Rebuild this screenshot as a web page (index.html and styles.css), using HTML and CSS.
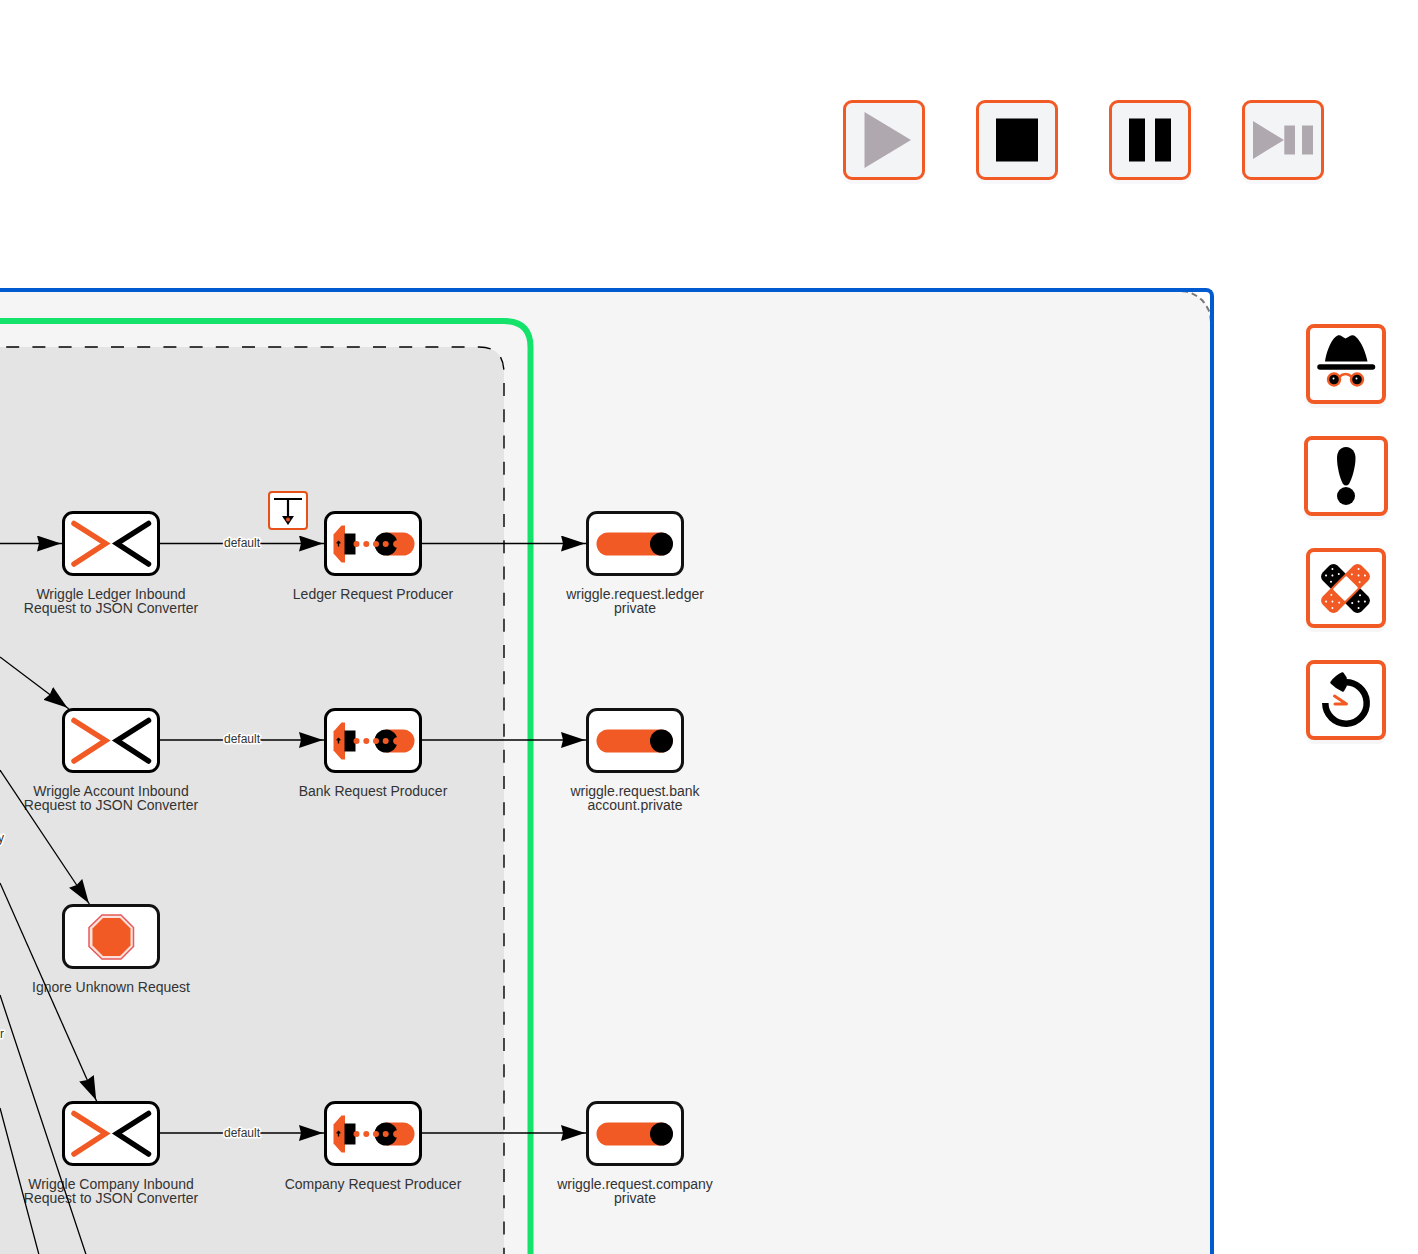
FILE: index.html
```html
<!DOCTYPE html>
<html lang="en">
<head>
<meta charset="utf-8">
<title>Flow designer</title>
<link rel="stylesheet" href="styles.css">
</head>
<body>
<svg class="symbols" aria-hidden="true">
  <symbol id="converter" viewBox="0 0 98 64">
    <path d="M12 12L43.500 32L12 52.500" fill="none" stroke="#f15a24" stroke-width="5.500" stroke-linecap="round"/>
    <path d="M86.500 12L55 32L86.500 52.500" fill="none" stroke="#000" stroke-width="5.500" stroke-linecap="round"/>
  </symbol>
  <symbol id="producer" viewBox="0 0 98 64">
    <path d="M9.500 23L17.500 14H21V51H17.500L9.500 42z" fill="#f15a24"/>
    <path d="M20.500 22H31.500V43H20.500z" fill="#000"/>
    <path d="M12.500 31L14.500 29L16.500 31V32H15.200V35H13.800V32H12.500z" fill="#000"/>
    <path d="M62 21H79A11.500 11.500 0 0 1 79 44H62z" fill="#f15a24"/>
    <circle cx="62" cy="32.500" r="11.500" fill="#000"/>
    <g fill="#f15a24"><circle cx="32.500" cy="32.500" r="3"/><circle cx="42.300" cy="32.500" r="3"/><circle cx="52" cy="32.500" r="3"/><circle cx="61.700" cy="32.500" r="3"/><path d="M69 32.500A4 4 0 0 1 74 29V36A4 4 0 0 1 69 32.500z"/></g>
  </symbol>
  <symbol id="queue" viewBox="0 0 98 64">
    <rect x="10.500" y="21" width="76" height="23" rx="11.500" fill="#f15a24"/>
    <circle cx="75.500" cy="32.500" r="11.500" fill="#000"/>
  </symbol>
  <symbol id="stop-sign" viewBox="0 0 98 64">
    <path d="M40 10.500H59L71.500 23V42L59 54.500H40L27 42V23z" fill="#fbe0dc" stroke="#e4595b" stroke-width="1.500"/>
    <path d="M41 13.500H58L68.500 24V41L58 51.500H41L30.500 41V24z" fill="#f15a24"/>
  </symbol>
</svg>

<div class="shell">
  <header class="toolbar">
    <button class="tool" type="button" aria-label="Start"><svg viewBox="3 3 76 74"><path d="M21.500 12L68 40L21.500 68z" fill="#b0a8af"/></svg></button>
    <button class="tool" type="button" aria-label="Stop"><svg viewBox="3 3 76 74"><path d="M20 18.500H62V61.500H20z"/></svg></button>
    <button class="tool" type="button" aria-label="Pause"><svg viewBox="3 3 76 74"><path d="M20 18.500H36V61.500H20zM46 18.500H62V61.500H46z"/></svg></button>
    <button class="tool" type="button" aria-label="Start paused"><svg viewBox="3 3 76 74"><path d="M11 21L42 40L11 59zM42.300 25.500H53V54.500H42.300zM60 25.500H71V54.500H60z" fill="#b0a8af"/></svg></button>
  </header>

  <main class="workspace">
    <section class="canvas" aria-label="Module flow">
      <div class="module"></div>

      <svg class="groups" aria-hidden="true">
        <path class="flow-group" d="M-20 55H479Q504 55 504 81V3000H-20z"/>
        <path class="component-group" d="M-10 29H504Q530.500 29 530.500 55V3000"/>
      </svg>

      <figure class="node col-1 row-1"><svg class="box"><use href="#converter"/></svg><figcaption>Wriggle Ledger Inbound<br>Request to JSON Converter</figcaption></figure>
      <figure class="node col-2 row-1"><svg class="box"><use href="#producer"/></svg><figcaption>Ledger Request Producer</figcaption></figure>
      <figure class="node endpoint col-3 row-1"><svg class="box"><use href="#queue"/></svg><figcaption>wriggle.request.ledger<br>private</figcaption></figure>

      <figure class="node col-1 row-2"><svg class="box"><use href="#converter"/></svg><figcaption>Wriggle Account Inbound<br>Request to JSON Converter</figcaption></figure>
      <figure class="node col-2 row-2"><svg class="box"><use href="#producer"/></svg><figcaption>Bank Request Producer</figcaption></figure>
      <figure class="node endpoint col-3 row-2"><svg class="box"><use href="#queue"/></svg><figcaption>wriggle.request.bank<br>account.private</figcaption></figure>

      <figure class="node endpoint col-1 row-3"><svg class="box"><use href="#stop-sign"/></svg><figcaption>Ignore Unknown Request</figcaption></figure>

      <figure class="node col-1 row-4"><svg class="box"><use href="#converter"/></svg><figcaption>Wriggle Company Inbound<br>Request to JSON Converter</figcaption></figure>
      <figure class="node col-2 row-4"><svg class="box"><use href="#producer"/></svg><figcaption>Company Request Producer</figcaption></figure>
      <figure class="node endpoint col-3 row-4"><svg class="box"><use href="#queue"/></svg><figcaption>wriggle.request.company<br>private</figcaption></figure>

      <svg class="edges">
        <defs>
          <marker id="arrow" markerUnits="userSpaceOnUse" markerWidth="24" markerHeight="16" refX="26" refY="8" orient="auto"><path d="M0 0L24 8L0 16L2 8z"/></marker>
        </defs>
        <g class="links">
          <path d="M0 251.500H63"/><path d="M160 251.500H325"/><path d="M421 251.500H587"/>
          <path d="M160 448H325"/><path d="M421 448H587"/>
          <path d="M160 841H325"/><path d="M421 841H587"/>
          <path d="M0 365L69 417"/>
          <path d="M0 478L90 613"/>
          <path d="M0 591L97 810"/>
        </g>
        <path class="link-out" d="M0 703L116 1053M0 816L64 1057"/>
        <g class="link-labels">
          <text x="242" y="255">default</text>
          <text x="242" y="451">default</text>
          <text x="242" y="845">default</text>
          <text x="1" y="550">y</text>
          <text x="2" y="746">r</text>
        </g>
      </svg>

      <button class="wiretap" type="button" aria-label="Wiretap">
        <svg viewBox="2 2 36 35"><path d="M6 8H34M20 8V27" fill="none" stroke="#000" stroke-width="2.200"/><path d="M14 25H26L20 34z"/><circle cx="20" cy="28.500" r="2" fill="#e8501a"/></svg>
      </button>
    </section>

    <aside class="side">
      <button class="side-tool" type="button" aria-label="Wiretap search">
        <svg viewBox="4 4 72 72">
          <path d="M19 37.500C20 30 24 17 30 12.500C34 9.500 36 13 39.500 14.500C43 13 46 9.500 49.500 12.500C56 18 60 30 61.500 37.500z"/>
          <path d="M14 43H66.500" stroke="#000" stroke-width="5.500" stroke-linecap="round"/>
          <path d="M33 53Q39.500 47 46 53" fill="none" stroke="#f15a24" stroke-width="2.500"/>
          <g stroke="#f15a24" stroke-width="2.400"><circle cx="28" cy="55.500" r="6"/><circle cx="51" cy="55.500" r="6"/></g>
          <circle cx="27.500" cy="54.500" r="1" fill="#fff"/><circle cx="50.500" cy="54.500" r="1" fill="#fff"/>
        </svg>
      </button>
      <button class="side-tool wide" type="button" aria-label="Errors">
        <svg viewBox="4 4 76 72"><path d="M42 11C48 11 51.500 16 51.500 22C51.500 31 48 43 45 48Q42 51 39 48C36 43 33 31 33 22C33 16 36 11 42 11z"/><circle cx="42" cy="60" r="9"/></svg>
      </button>
      <button class="side-tool" type="button" aria-label="Hospital">
        <svg viewBox="4 4 72 72">
          <g transform="rotate(45 39.500 40.500)">
            <rect x="12" y="30" width="55" height="21" rx="6"/>
            <g fill="#fff"><circle cx="16.500" cy="36" r="1"/><circle cx="16.500" cy="45" r="1"/><circle cx="21" cy="40.500" r="1"/><circle cx="24.500" cy="35" r="1"/><circle cx="24.500" cy="46" r="1"/><circle cx="62.500" cy="36" r="1"/><circle cx="62.500" cy="45" r="1"/><circle cx="58" cy="40.500" r="1"/><circle cx="54.500" cy="35" r="1"/><circle cx="54.500" cy="46" r="1"/></g>
          </g>
          <g transform="rotate(-45 39.500 40.500)">
            <rect x="12" y="30" width="55" height="21" rx="6" fill="#f15a24"/>
            <rect x="30" y="32" width="19" height="17" rx="1" fill="#fff"/>
            <g fill="#fff"><circle cx="16.500" cy="36" r="1"/><circle cx="16.500" cy="45" r="1"/><circle cx="21" cy="40.500" r="1"/><circle cx="25" cy="35" r="1"/><circle cx="25" cy="46" r="1"/><circle cx="62.500" cy="36" r="1"/><circle cx="62.500" cy="45" r="1"/><circle cx="58" cy="40.500" r="1"/><circle cx="54" cy="35" r="1"/><circle cx="54" cy="46" r="1"/></g>
          </g>
        </svg>
      </button>
      <button class="side-tool" type="button" aria-label="Replay">
        <svg viewBox="4 4 72 72">
          <path d="M19.300 43A20.700 20.700 0 1 0 38 22.400" fill="none" stroke="#000" stroke-width="6.500"/>
          <path d="M25.500 22.500Q30 16.500 36.500 13.500L39.500 18V26L37 30.500Q31 28 25.500 22.500z" stroke="#000" stroke-width="2.500" stroke-linejoin="round"/>
          <path d="M28.500 36L40.500 44H29" fill="none" stroke="#f15a24" stroke-width="3" stroke-linecap="round" stroke-linejoin="round"/>
        </svg>
      </button>
    </aside>
  </main>
</div>
</body>
</html>
```
FILE: styles.css
```css
* { box-sizing: border-box; }

body {
  margin: 0;
  background: #fff;
  color: #333;
  font-family: "Liberation Sans", Arial, sans-serif;
  font-size: 14px;
}

.symbols { position: absolute; width: 0; height: 0; }

.shell {
  display: flex;
  flex-direction: column;
  min-height: 100vh;
}

.toolbar {
  display: flex;
  justify-content: flex-end;
  gap: 51px;
  padding: 100px 94px 108px;
}

button {
  padding: 0;
  cursor: pointer;
}

button svg { display: block; width: 100%; height: 100%; }

.tool {
  width: 82px;
  height: 80px;
  border: 3px solid #f15a24;
  border-radius: 9px;
  background: #f3f4f6;
  box-shadow: 0 4px 0 #f8f8fa;
}

.workspace {
  display: flex;
  flex: 1;
}

.canvas {
  position: relative;
  flex: 1;
  min-width: 0;
  min-height: 940px;
  overflow: hidden;
  border: 4px solid #005bd1;
  border-width: 4px 4px 0 0;
  border-radius: 0 8px 0 0;
  background: #fff;
}

.module {
  position: absolute;
  inset: -2px -2px -40px -40px;
  border: 2px dashed #777;
  border-radius: 32px;
  background: #f5f5f5;
}

.groups,
.edges {
  position: absolute;
  inset: 0;
  width: 100%;
  height: 100%;
}

.edges { z-index: 1; pointer-events: none; }

.flow-group {
  fill: #e4e4e4;
  stroke: #000;
  stroke-width: 1.4;
  stroke-dasharray: 13 13.2;
}

.component-group {
  fill: none;
  stroke: #13e36b;
  stroke-width: 6;
}

.links path,
.link-out {
  fill: none;
  stroke: #000;
  stroke-width: 1.3;
}

.links > path { marker-end: url(#arrow); }

.link-labels {
  font-size: 12px;
  text-anchor: middle;
  fill: #333;
  stroke: #fff;
  stroke-width: 3px;
  stroke-linejoin: round;
  paint-order: stroke;
}

.node {
  position: absolute;
  display: flex;
  flex-direction: column;
  align-items: center;
  gap: 11px;
  width: 200px;
  margin: 0;
}

.col-1 { left: 11px; }
.col-2 { left: 273px; }
.col-3 { left: 535px; }

.row-1 { top: 219px; }
.row-2 { top: 416px; }
.row-3 { top: 612px; }
.row-4 { top: 809px; }

.box {
  position: relative;
  z-index: 2;
  width: 98px;
  height: 65px;
  outline: 3px solid #000;
  outline-offset: -3px;
  border-radius: 11px;
  background: #fff;
}

.endpoint .box { outline-color: #111; }

figcaption {
  line-height: 14px;
  text-align: center;
  white-space: nowrap;
}

.wiretap {
  position: absolute;
  z-index: 2;
  left: 268px;
  top: 199px;
  width: 40px;
  height: 39px;
  border: 2px solid #e8501a;
  border-radius: 4px;
  background: #fff;
}

.side {
  display: flex;
  flex-direction: column;
  align-items: center;
  gap: 32px;
  width: 204px;
  padding: 36px 0 0 60px;
}

.side-tool {
  width: 80px;
  height: 80px;
  border: 4px solid #f15a24;
  border-radius: 8px;
  background: #fff;
  box-shadow: 0 4px 0 #f6f6f8;
}

.side-tool.wide { width: 84px; }
```
